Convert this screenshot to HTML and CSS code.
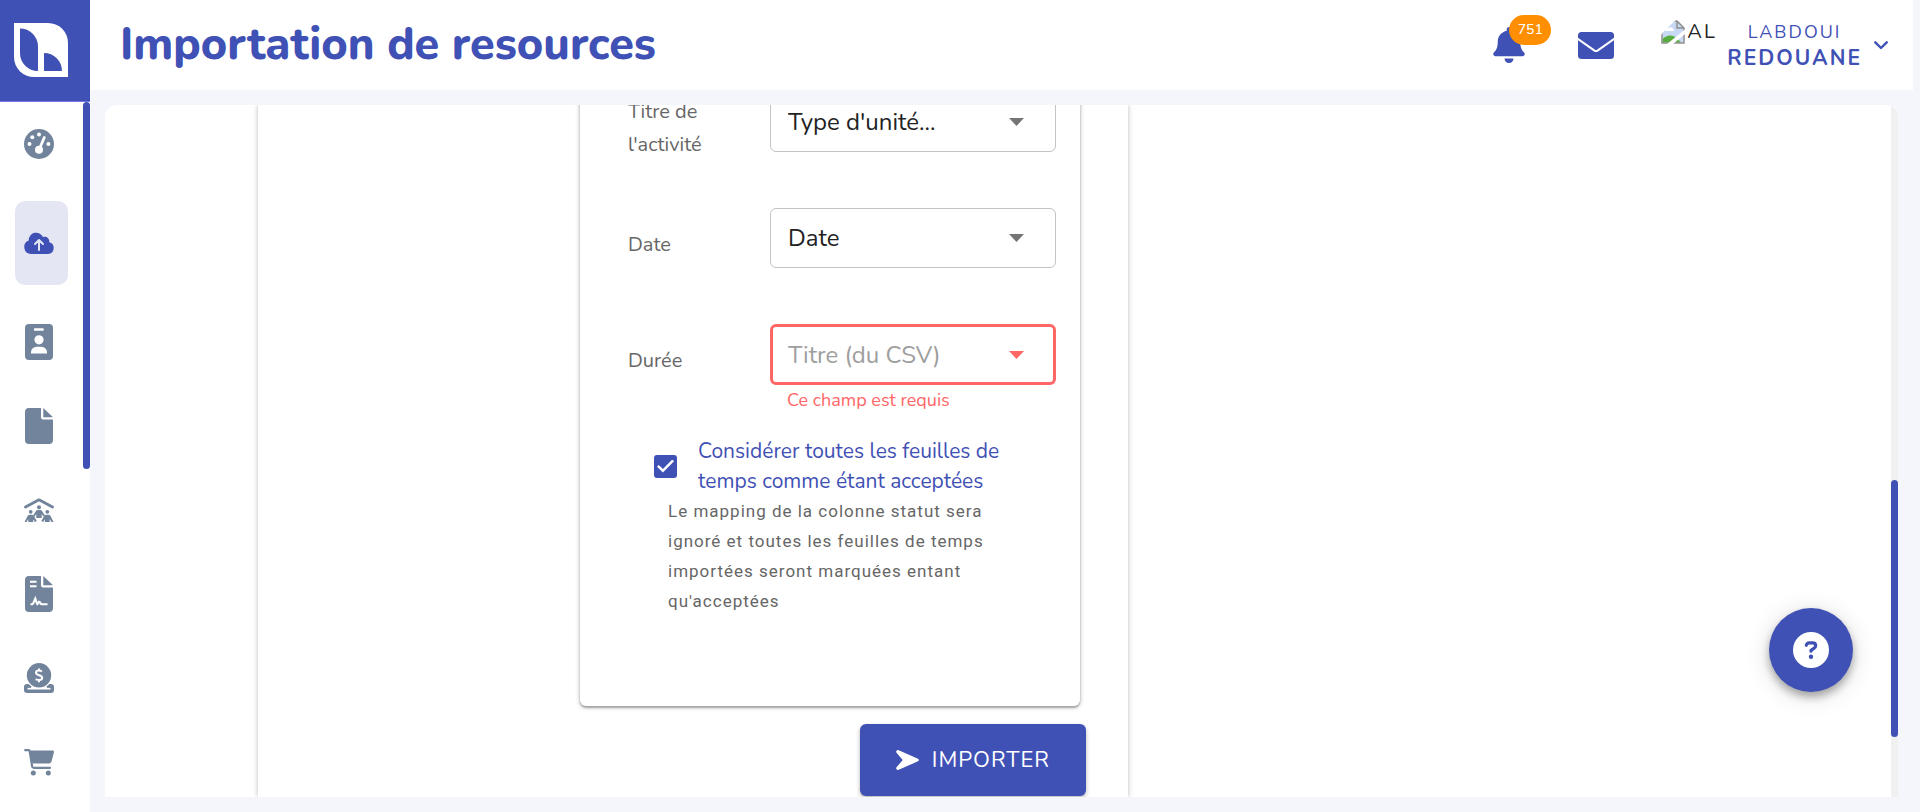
FILE: index.html
```html
<!DOCTYPE html>
<html lang="fr">
<head>
<meta charset="utf-8">
<meta name="viewport" content="width=device-width, initial-scale=1">
<title>Importation de resources</title>
<link rel="stylesheet" href="styles.css">
</head>
<body>
<div class="app">
  <aside class="sidebar">
    <a class="brand" href="#" aria-label="Accueil">
      <svg width="54" height="54" viewBox="0 0 54 54"><path fill="#fff" d="M0 0H34A20 20 0 0 1 54 20V54H20A20 20 0 0 1 0 34Z"/><path fill="#3f51b5" d="M6 5.500A18 18 0 0 1 24 23.500V48A18 18 0 0 1 6 30ZM30 30A18 18 0 0 1 48 48H30Z"/></svg>
    </a>
    <div class="side-scroll">
      <nav class="menu" aria-label="Navigation">
        <a class="item" href="#" aria-label="Tableau de bord">
          <svg width="30" height="30" viewBox="0 0 30 30"><circle cx="15" cy="15" r="15" fill="currentColor"/><g fill="#fff"><circle cx="5.500" cy="15" r="2"/><circle cx="8.300" cy="8.300" r="2"/><circle cx="15" cy="5.600" r="2"/><circle cx="24.400" cy="15" r="2"/><circle cx="15" cy="20.700" r="4"/></g><path d="M15.800 19 20.300 8.500" stroke="#fff" stroke-width="2.800" stroke-linecap="round"/></svg>
        </a>
        <a class="item active" href="#" aria-label="Importation" aria-current="page">
          <svg width="30" height="22" viewBox="0 0 30 22"><path fill="currentColor" d="M7 22A7 7 0 0 1 4.700 8.500 7.500 7.500 0 0 1 19 5 4.700 4.700 0 0 1 25.200 10.200 6 6 0 0 1 24 22Z"/><path d="M15 18V8.500M11 12l4-4 4 4" fill="none" stroke="#e4e6f3" stroke-width="2" stroke-linecap="round" stroke-linejoin="round"/></svg>
        </a>
        <a class="item" href="#" aria-label="Employés">
          <svg width="28" height="36" viewBox="0 0 28 36"><rect width="28" height="36" rx="4" fill="currentColor"/><g fill="#fff"><rect x="9" y="4.300" width="9.700" height="2.500" rx=".6"/><circle cx="14" cy="15.800" r="4.600"/><path d="M6 29.500V28a5.500 5.500 0 0 1 5.500-5.300h5A5.500 5.500 0 0 1 22 28v1.500Z"/></g></svg>
        </a>
        <a class="item" href="#" aria-label="Documents">
          <svg width="28" height="36" viewBox="0 0 28 36"><path fill="currentColor" d="M4 0H16V9.500A2 2 0 0 0 18 11.500H28V32A4 4 0 0 1 24 36H4A4 4 0 0 1 0 32V4A4 4 0 0 1 4 0ZM18.300 0 28 9.200H18.300Z"/></svg>
        </a>
        <a class="item" href="#" aria-label="Équipes">
          <svg width="30" height="24" viewBox="0 0 30 24"><path d="M1.500 9 15 1.800 28.500 9" fill="none" stroke="currentColor" stroke-width="2.800" stroke-linecap="round" stroke-linejoin="round"/><g fill="currentColor"><circle cx="15" cy="9.300" r="2"/><circle cx="6.700" cy="13.800" r="1.900"/><circle cx="23.300" cy="13.800" r="1.900"/><path d="M12.300 20v-4l-1.600 2.500-1.600-1 2.700-4.300a2.500 2.500 0 0 1 2-1.200h2.400a2.500 2.500 0 0 1 2 1.200l2.700 4.300-1.600 1-1.600-2.500v4ZM4.300 24v-3L2.500 24H.6l2.900-6a2.500 2.500 0 0 1 2-1.300h2.400a2.500 2.500 0 0 1 2 1.300l2.900 5-1.800 1-1.800-2.500V24ZM20.900 24v-2.500L19.100 24l-1.800-1 2.900-5a2.500 2.500 0 0 1 2-1.300h2.400a2.500 2.500 0 0 1 2 1.300l2.900 6h-2l-1.800-3v3Z"/></g></svg>
        </a>
        <a class="item" href="#" aria-label="Contrats">
          <svg width="28" height="36" viewBox="0 0 28 36"><path fill="currentColor" d="M4 0H16V9.500A2 2 0 0 0 18 11.500H28V32A4 4 0 0 1 24 36H4A4 4 0 0 1 0 32V4A4 4 0 0 1 4 0ZM18.300 0 28 9.200H18.300Z"/><path d="M5 5.700h6.500M5 10.200h6.500M5.500 28.300h1.800l1-1.200 2-4.500 1.700 5 .5.500 1.500-2.300.8.300 1 1.700 1.200.5h5.500" fill="none" stroke="#fff" stroke-width="2.100"/></svg>
        </a>
        <a class="item" href="#" aria-label="Paiements">
          <svg width="30" height="30" viewBox="0 0 30 30"><path fill="currentColor" d="M3 21h24a3 3 0 0 1 3 3v3a3 3 0 0 1-3 3H3a3 3 0 0 1-3-3v-3a3 3 0 0 1 3-3Z"/><path d="M3.500 25.700h23" stroke="#fff" stroke-width="1.600"/><circle cx="15" cy="12.300" r="13.500" fill="#fff"/><path d="M7 24.400h16" stroke="#fff" stroke-width="1.300"/><circle cx="15" cy="12.300" r="12.200" fill="currentColor"/><path d="M18 8.500c-1-.6-2-.9-3-.9-2 0-3 .9-3 2.200 0 3.300 6.200 1.600 6.200 5 0 1.500-1.200 2.300-3.100 2.300-1.300 0-2.400-.4-3.400-1M15 5.500v2.300M15 17v2.300" fill="none" stroke="#fff" stroke-width="2"/></svg>
        </a>
        <a class="item" href="#" aria-label="Achats">
          <svg width="30" height="27" viewBox="0 0 30 27"><path fill="currentColor" d="M5.500 1.500H28.300A1.600 1.600 0 0 1 29.900 3.500L27.500 12.500A3 3 0 0 1 24.700 14.600H8.500Z"/><path d="M1.200 1.200H4.500A1.200 1.200 0 0 1 5.700 2.200L8 16.500A2 2 0 0 0 10 18.800H26" fill="none" stroke="currentColor" stroke-width="2.200" stroke-linecap="round"/><circle cx="9.300" cy="24" r="2.500" fill="currentColor"/><circle cx="24.300" cy="24" r="2.500" fill="currentColor"/></svg>
        </a>
      </nav>
      <div class="side-track"><div class="side-thumb"></div></div>
    </div>
  </aside>

  <div class="page">
    <header class="topbar">
      <h1 class="title">Importation de resources</h1>
      <button class="icon-button bell" type="button" aria-label="Notifications">
        <svg width="32" height="36" viewBox="0 0 448 512"><path fill="currentColor" d="M224 512c35.320 0 63.970-28.650 63.970-64H160.030c0 35.350 28.650 64 63.970 64zm215.390-149.710c-19.320-20.760-55.470-51.990-55.470-154.290 0-77.700-54.480-139.900-127.940-155.160V32c0-17.670-14.320-32-31.980-32s-31.980 14.330-31.980 32v20.840C118.560 68.100 64.080 130.300 64.080 208c0 102.300-36.150 133.530-55.470 154.290-6 6.450-8.660 14.160-8.610 21.710.11 16.400 12.980 32 32.100 32h383.800c19.120 0 32-15.600 32.100-32 .05-7.550-2.610-15.270-8.610-21.710z"/></svg>
        <span class="badge">751</span>
      </button>
      <button class="icon-button mail" type="button" aria-label="Messages">
        <svg width="36" height="27" viewBox="0 0 36 27"><rect width="36" height="27" rx="3.500" fill="currentColor"/><path d="M-1 6.200 16.500 18.600Q18 19.600 19.500 18.600L37 6.200" fill="none" stroke="#fff" stroke-width="2"/></svg>
      </button>
      <button class="user" type="button">
        <span class="avatar">
          <svg width="24" height="24" viewBox="0 0 24 24"><path fill="#c8d9f6" d="M1.500 1.500H16L22.500 8V22.500H1.500Z"/><path fill="#fff" d="M4 11a3 3 0 0 1 3-3 4 4 0 0 1 6 2v1Z"/><path fill="#57ad3d" d="M1.500 22.500V19q5-5 11-3l8 6.500Z"/><path fill="none" stroke="#8f8f8f" stroke-width="1.500" d="M1 1V23H23V8L16 1ZM16 1V8H23"/><path fill="#fff" d="M0 0H15L4 10 0 15ZM24 9.500V14L12 24H6Z"/></svg>
          <span class="alt">AL</span>
        </span>
        <span class="names"><span class="last">LABDOUI</span><strong class="first">REDOUANE</strong></span>
        <svg width="14" height="9" viewBox="0 0 14 9"><path d="M1.300 1.300 7 7 12.700 1.300" fill="none" stroke="currentColor" stroke-width="2.400" stroke-linecap="round" stroke-linejoin="round"/></svg>
      </button>
    </header>

    <main class="content">
      <div class="stage">
        <form class="panel">
          <section class="card">
            <div class="row">
              <label class="row-label" for="activity">Titre de l'activité</label>
              <div class="field">
                <div class="select-wrap">
                  <select class="select" id="activity"><option>Type d'unité...</option></select>
                  <svg class="caret" width="15" height="8" viewBox="0 0 15 8"><path fill="currentColor" d="M0 0H15L7.500 8Z"/></svg>
                </div>
              </div>
            </div>
            <div class="row">
              <label class="row-label" for="date">Date</label>
              <div class="field">
                <div class="select-wrap">
                  <select class="select" id="date"><option>Date</option></select>
                  <svg class="caret" width="15" height="8" viewBox="0 0 15 8"><path fill="currentColor" d="M0 0H15L7.500 8Z"/></svg>
                </div>
              </div>
            </div>
            <div class="row">
              <label class="row-label" for="duration">Durée</label>
              <div class="field error">
                <div class="select-wrap">
                  <select class="select" id="duration" aria-invalid="true" aria-describedby="duration-error"><option>Titre (du CSV)</option></select>
                  <svg class="caret" width="15" height="8" viewBox="0 0 15 8"><path fill="currentColor" d="M0 0H15L7.500 8Z"/></svg>
                </div>
                <p class="message" id="duration-error">Ce champ est requis</p>
              </div>
            </div>
            <div class="consent">
              <input class="check" type="checkbox" id="accept" checked aria-describedby="accept-help">
              <label class="check-label" for="accept">Considérer toutes les feuilles de temps comme étant acceptées</label>
            </div>
            <p class="help" id="accept-help">Le mapping de la colonne statut sera ignoré et toutes les feuilles de temps importées seront marquées entant qu'acceptées</p>
          </section>
          <button class="submit" type="button">
            <svg width="23" height="20" viewBox="0 0 23 20"><path fill="#fff" d="M.3 2.400A1.700 1.700 0 0 1 2.700.3L22 8.700A1.400 1.400 0 0 1 22 11.300L2.700 19.700A1.700 1.700 0 0 1 .3 17.600L6.700 10Z"/></svg>
            <span>IMPORTER</span>
          </button>
        </form>
      </div>
      <div class="track"><div class="thumb"></div></div>
    </main>
  </div>

  <button class="fab" type="button" aria-label="Aide">
    <svg width="36" height="36" viewBox="0 0 36 36"><circle cx="18" cy="18" r="18" fill="#fff"/><path d="M13.300 13.300Q13.800 10.800 16.500 10.800H19.300Q22.700 10.800 22.700 13.600 22.700 15.300 20.900 16.400L18 18.300V19.200" fill="none" stroke="#3f51b5" stroke-width="3.200" stroke-linecap="round" stroke-linejoin="round"/><circle cx="18" cy="24.800" r="2.200" fill="#3f51b5"/></svg>
  </button>
</div>
</body>
</html>
```
FILE: styles.css
```css
:root {
  --primary: #3f51b5;
  --muted: #72849c;
  --canvas: #f5f6fb;
  --danger: #ff6666;
}

* {
  box-sizing: border-box;
}

body {
  margin: 0;
  background: var(--canvas);
  font-family: Nunito, "Open Sans", "Noto Sans", sans-serif;
}

button {
  padding: 0;
  border: 0;
  background: none;
  color: var(--primary);
  font-family: inherit;
}

svg {
  display: block;
  flex: none;
}

.app {
  display: flex;
  height: 100vh;
  overflow: hidden;
}

/* Sidebar */
.sidebar {
  display: flex;
  flex: none;
  flex-direction: column;
  width: 90px;
  background: #fff;
}

.brand {
  flex: none;
  padding: 23px 14px 24px;
  border-bottom: 1px solid #7a74e8;
  background: var(--primary);
}

.side-scroll {
  display: flex;
  flex: 1;
  min-height: 0;
}

.menu {
  flex: 1;
  padding: 0 15px;
  overflow: hidden;
}

.item {
  display: flex;
  align-items: center;
  justify-content: center;
  height: 84px;
  padding-right: 5px;
  border-radius: 10px;
  color: var(--muted);
}

.item.active {
  margin: 15px 0;
  background: #e4e6f3;
  color: var(--primary);
}

.side-track {
  width: 7px;
}

.side-thumb {
  height: 367px;
  border-radius: 4px;
  background: var(--primary);
}

/* Header */
.page {
  display: flex;
  flex: 1;
  flex-direction: column;
  min-width: 0;
}

.topbar {
  display: flex;
  flex: none;
  align-items: center;
  height: 90px;
  margin-right: 7px;
  padding: 0 25px 0 30px;
  background: #fff;
  color: var(--primary);
}

.title {
  flex: 1;
  margin: 0;
  font-size: 45px;
  font-weight: 800;
  line-height: 60px;
}

.icon-button {
  position: relative;
}

.badge {
  position: absolute;
  top: -12px;
  left: 16px;
  width: 42px;
  border-radius: 15px;
  background: #ff8f00;
  color: #fff;
  font-size: 14px;
  font-weight: 500;
  line-height: 30px;
}

.mail {
  margin-left: 53px;
}

.user {
  display: flex;
  align-items: center;
  margin-left: 47px;
}

.avatar {
  display: flex;
  align-items: center;
  align-self: flex-start;
  gap: 2px;
  width: 56px;
  color: #222;
  font-size: 20px;
  letter-spacing: 2px;
  line-height: 26px;
}

.names {
  display: flex;
  flex-direction: column;
  align-items: center;
  margin: 0 12px 0 10px;
  letter-spacing: 2px;
}

.last {
  font-size: 18px;
  line-height: 26px;
}

.first {
  font-size: 21px;
  line-height: 26px;
}

/* Content */
.content {
  display: flex;
  flex: 1;
  min-height: 0;
  margin: 15px 22px 15px 15px;
  overflow: hidden;
  border-radius: 12px 12px 0 0;
  background: #fff;
}

.stage {
  display: grid;
  flex: 1;
  grid-template-columns: 153fr 870fr 763fr;
  min-width: 0;
}

.track {
  display: flex;
  flex-direction: column;
  width: 7px;
  padding-bottom: 60px;
  background: #f0f0f0;
}

.thumb {
  height: 257px;
  margin-top: auto;
  border-radius: 4px;
  background: var(--primary);
}

.panel {
  display: flex;
  grid-column: 2;
  flex-direction: column;
  min-height: 0;
  padding: 0 42px 1px 322px;
  box-shadow: 0 0 5px rgba(0, 0, 0, 0.28);
}

.card {
  display: flex;
  flex: 1;
  flex-direction: column;
  justify-content: flex-end;
  min-height: 0;
  margin: -20px 6px 18px 0;
  padding: 0 24px 90px 48px;
  border-radius: 6px;
  box-shadow: 0 2px 2px rgba(0, 0, 0, 0.25), 0 1px 5px rgba(0, 0, 0, 0.25);
}

.row {
  display: grid;
  flex: none;
  grid-template-columns: 142px 1fr;
  height: 116px;
}

.row-label {
  display: flex;
  align-items: center;
  width: 100px;
  height: 72px;
  color: #666;
  font-size: 20px;
  line-height: 33px;
}

.select-wrap {
  display: grid;
  align-items: center;
  color: #757575;
}

.select,
.caret {
  grid-area: 1 / 1;
}

.select {
  width: 100%;
  height: 60px;
  padding: 0 48px 0 17px;
  border: 1px solid #c4c4c4;
  border-radius: 6px;
  appearance: none;
  background: none;
  color: #222;
  font-family: inherit;
  font-size: 24px;
}

.caret {
  justify-self: end;
  margin-right: 32px;
  pointer-events: none;
}

.error .select-wrap {
  color: var(--danger);
}

.error .select {
  height: 61px;
  padding-left: 15px;
  border: 3px solid var(--danger);
  color: #9e9e9e;
}

.message {
  margin: 0 0 0 17px;
  color: var(--danger);
  font-size: 18px;
  line-height: 30px;
}

.consent {
  display: flex;
  flex: none;
  align-items: center;
  gap: 21px;
  margin: -4px 20px 0 26px;
}

.check {
  display: grid;
  flex: none;
  place-items: center;
  width: 23px;
  height: 23px;
  margin: 0;
  border-radius: 3px;
  appearance: none;
  background: var(--primary);
}

.check:checked::before {
  width: 17px;
  height: 13px;
  background: #fff;
  clip-path: polygon(0 55%, 10% 42%, 35% 74%, 90% 0, 100% 14%, 35% 100%);
  content: "";
}

.check-label {
  color: var(--primary);
  font-size: 21px;
  line-height: 30px;
}

.help {
  flex: none;
  margin: 0 60px 0 40px;
  color: #666;
  font-family: Roboto, sans-serif;
  font-size: 17px;
  letter-spacing: 1px;
  line-height: 30px;
}

.submit {
  display: flex;
  flex: none;
  align-items: center;
  align-self: flex-end;
  gap: 13px;
  height: 72px;
  padding: 0 36px;
  border-radius: 6px;
  background: var(--primary);
  box-shadow: 0 2px 4px rgba(0, 0, 0, 0.3);
  color: #fff;
  font-size: 22px;
  letter-spacing: 1px;
}

.fab {
  position: fixed;
  right: 67px;
  bottom: 120px;
  display: grid;
  place-items: center;
  width: 84px;
  height: 84px;
  border-radius: 50%;
  background: var(--primary);
  box-shadow: 0 5px 8px rgba(0, 0, 0, 0.3), 0 4px 24px rgba(0, 0, 0, 0.15);
}
```
